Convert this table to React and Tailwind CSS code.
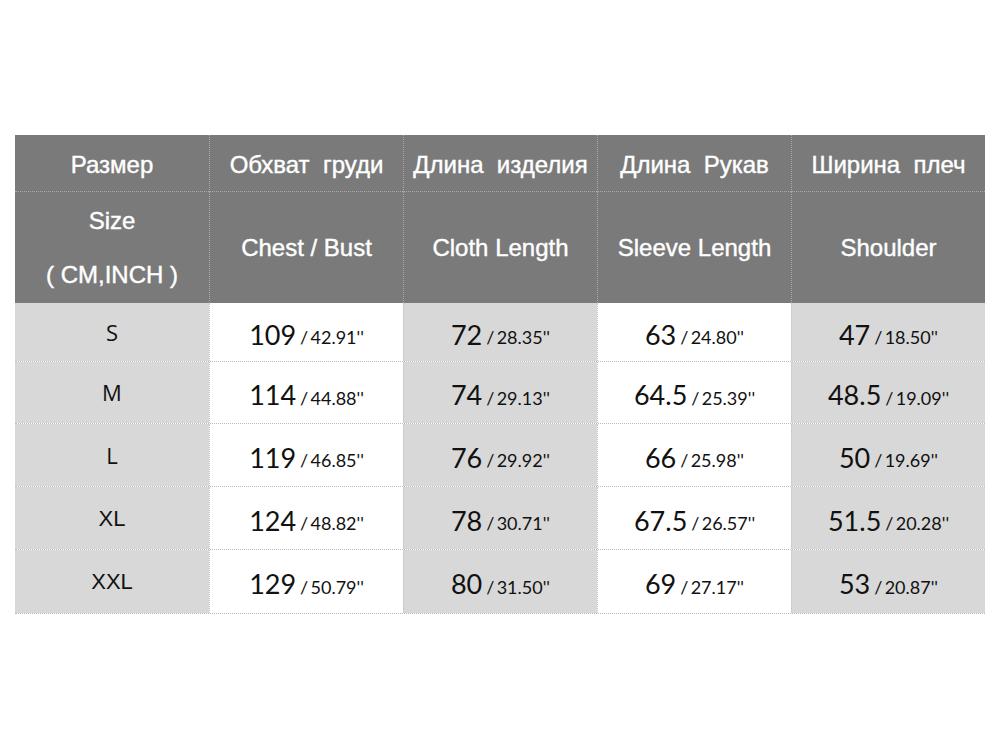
import React from 'react'

const heads = [
  ['Размер', null],
  ['Обхват  груди', 'Chest / Bust'],
  ['Длина  изделия', 'Cloth Length'],
  ['Длина  Рукав', 'Sleeve Length'],
  ['Ширина  плеч', 'Shoulder'],
]

const rows = [
  ['S', ['109', '42.91'], ['72', '28.35'], ['63', '24.80'], ['47', '18.50']],
  ['M', ['114', '44.88'], ['74', '29.13'], ['64.5', '25.39'], ['48.5', '19.09']],
  ['L', ['119', '46.85'], ['76', '29.92'], ['66', '25.98'], ['50', '19.69']],
  ['XL', ['124', '48.82'], ['78', '30.71'], ['67.5', '26.57'], ['51.5', '20.28']],
  ['XXL', ['129', '50.79'], ['80', '31.50'], ['69', '27.17'], ['53', '20.87']],
]

const rowH = ['h-[58px]', 'h-[62px]', 'h-[63px]', 'h-[63px]', 'h-[64px]']

const App = () => {
  return (
    <main className='w-[1000px] h-[750px] bg-white pt-[135px] pl-[15px]'>
      <div className='w-[970px] border-b border-dotted border-[#b8b8b8]'>
        {/* header */}
        <div className='grid grid-cols-5 bg-[#7a7a7a] text-white text-2xl [-webkit-text-stroke:0.4px_white] font-["Liberation_Sans",Arial,sans-serif]'>
          {heads.map(([ru], i) => (
            <div key={i} className={`h-[57px] pt-[3px] flex items-center justify-center whitespace-pre border-b border-dotted border-[#a8a8a8] ${i ? 'border-l border-l-[#a8a8a8]' : ''}`}>
              {ru}
            </div>
          ))}
          {heads.map(([, en], i) => (
            <div key={i} className={`h-[111px] flex flex-col items-center justify-center ${i ? 'border-l border-dotted border-[#a8a8a8]' : ''}`}>
              {en ? en : (
                <>
                  <span className='leading-[54px]'>Size</span>
                  <span className='leading-[54px]'>( CM,INCH )</span>
                </>
              )}
            </div>
          ))}
        </div>

        {/* data */}
        {rows.map((r, ri) => (
          <div key={ri} className={`grid grid-cols-5 ${rowH[ri]} ${ri ? 'border-t border-dotted border-[#bcbcbc]' : ''}`}>
            <div className={`flex items-center justify-center bg-[#d8d8d8] text-[#111] text-[22px] ${ri < 3 ? 'font-["Open_Sans",sans-serif]' : 'font-["Liberation_Sans",Arial,sans-serif]'}`}>
              {r[0]}
            </div>
            {r.slice(1).map(([a, b], ci) => (
              <div key={ci} className={`flex items-center justify-center pt-[4px] border-l border-dotted border-[#c4c4c4] font-["Lato",sans-serif] text-[#111] ${ci % 2 ? 'bg-[#d8d8d8]' : 'bg-white'}`}>
                <span className='text-[27px] leading-none'>{a}</span>
                <span className='text-[18px] leading-none ml-[4px] mt-[6px]'>/&#8201;{b}''</span>
              </div>
            ))}
          </div>
        ))}
      </div>
    </main>
  )
}

export default App
